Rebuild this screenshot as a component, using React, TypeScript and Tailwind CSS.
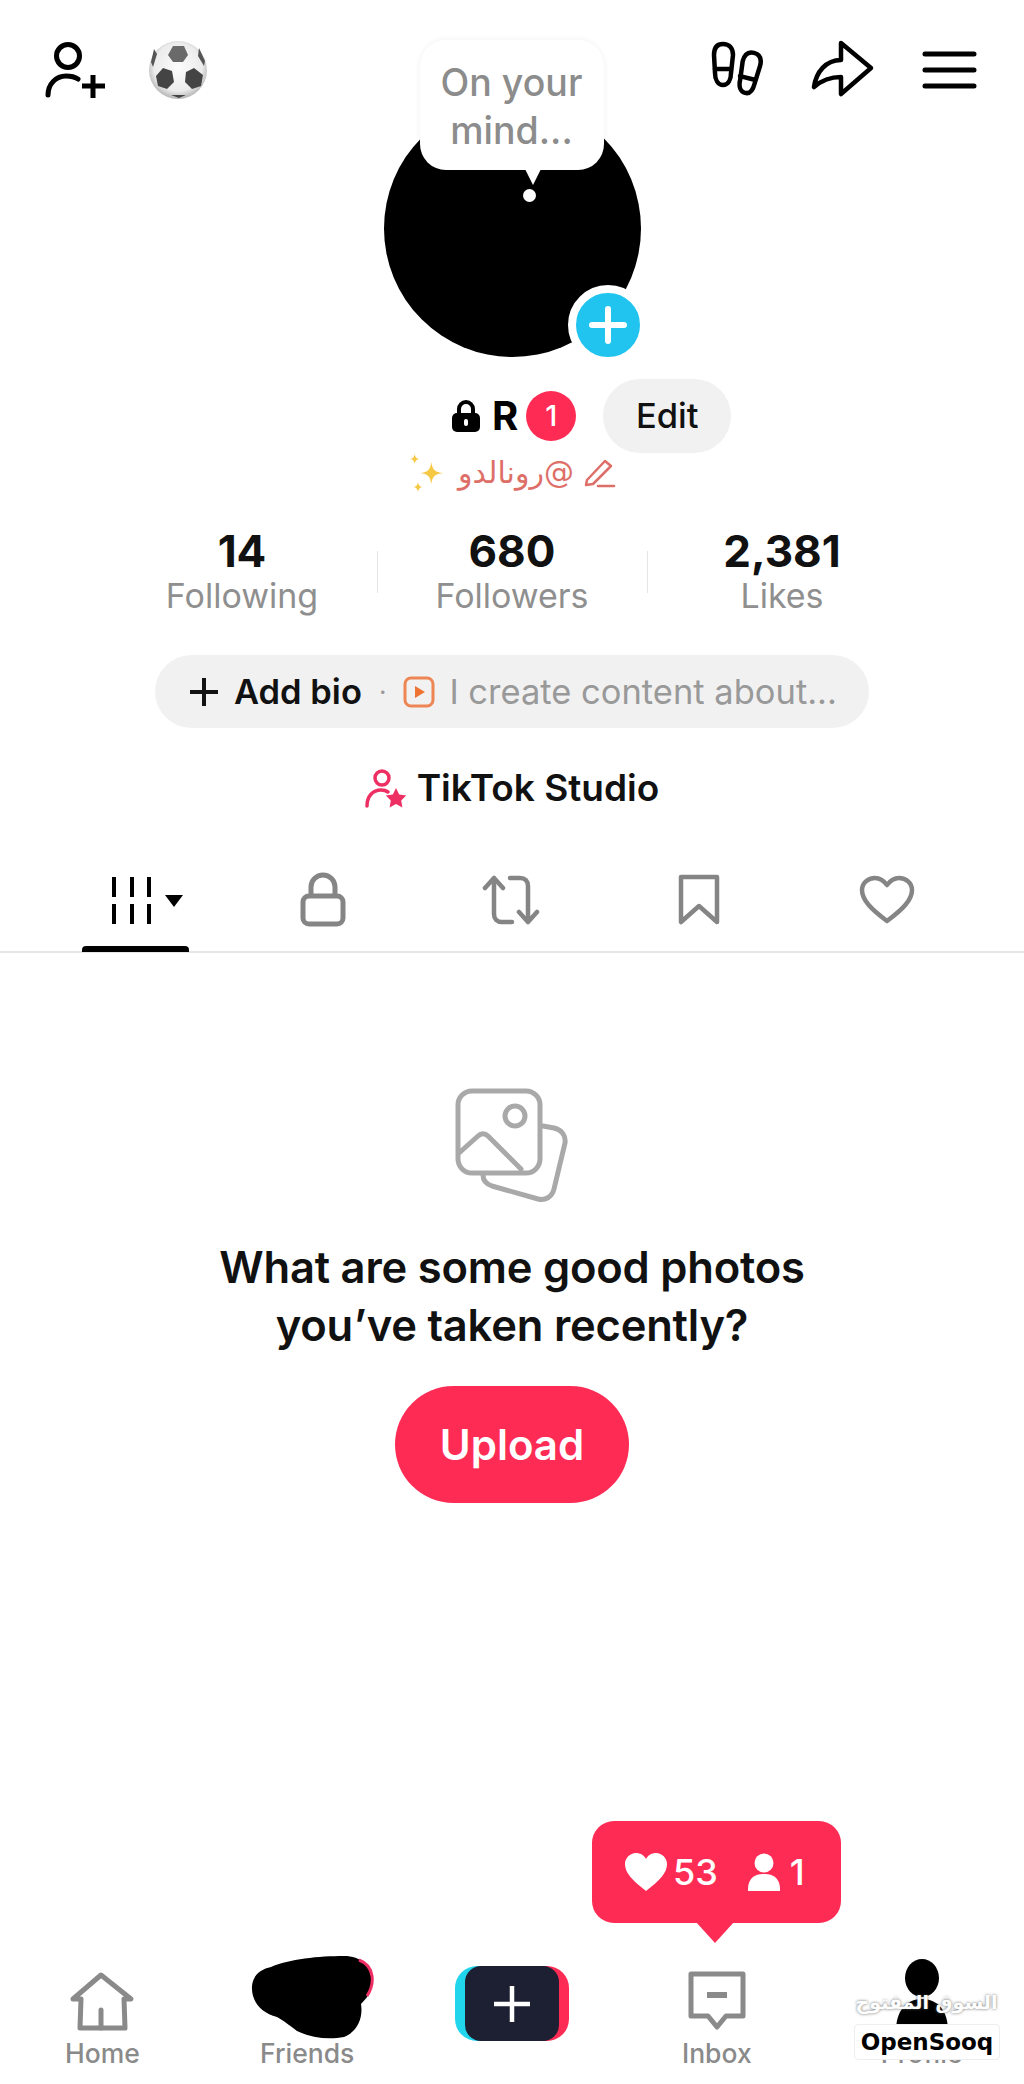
import React from 'react'

const FONT = 'font-["Inter","Noto_Sans",sans-serif]'

function PersonPlus() {
  return (
    <svg width="64" height="60" viewBox="44 38 64 60" fill="none" stroke="#000" strokeWidth="5" strokeLinecap="round">
      <circle cx="68" cy="54" r="11.5" />
      <path d="M48 93c0-11 8-19 18-19 5 0 9 1 12 3" />
      <path d="M82 84h23M93 73v23" strokeLinecap="butt" />
    </svg>
  )
}

function SoccerBall() {
  return (
    <svg width="64" height="64" viewBox="146 39 64 64">
      <defs>
        <radialGradient id="ball" cx="50%" cy="45%" r="55%">
          <stop offset="0%" stopColor="#fcfcfc" />
          <stop offset="75%" stopColor="#ececec" />
          <stop offset="100%" stopColor="#b5b5b5" />
        </radialGradient>
      </defs>
      <circle cx="178" cy="71" r="29" fill="url(#ball)" />
      <path d="M173 47h11l4 9-5 7h-10l-5-7z" fill="#6a6a6a" />
      <path d="M163 69l9 3 2 11-7 7-9-3-2-10z" fill="#444" />
      <path d="M194 69l-8 4-1 10 7 7 9-3 2-11z" fill="#444" />
      <path d="M154 50l-3 13 2 5 4-13z" fill="#555" />
      <path d="M199 49l6 13-1 5-6-10z" fill="#555" />
      <path d="M171 96h15l-7 3z" fill="#444" />
    </svg>
  )
}

function Footprints() {
  return (
    <svg width="56" height="60" viewBox="708 40 56 60" fill="none" stroke="#000" strokeWidth="4.5" strokeLinecap="round">
      <path d="M723 44c-6 0-9 4-9 11l1 18c0 7 3 12 8 12s8-5 8-12l2-18c0-7-4-11-10-11z" />
      <path d="M715 69h16" />
      <g transform="rotate(14 748 73)">
        <path d="M749 52c-6 0-9 4-9 11l2 18c0 7 3 12 8 12s7-5 7-12l1-18c0-7-3-11-9-11z" />
        <path d="M741 78h15" />
      </g>
    </svg>
  )
}

function Share() {
  return (
    <svg width="66" height="60" viewBox="810 40 66 60" fill="none" stroke="#000" strokeWidth="4.5" strokeLinejoin="round">
      <path d="M841 43l30 25-30 26V77c-11 0-19 3-27 10 2-15 12-27 27-27z" />
    </svg>
  )
}

function Menu() {
  return (
    <svg width="56" height="40" viewBox="922 49 56 40" fill="none" stroke="#000" strokeWidth="5" strokeLinecap="round">
      <path d="M925 53h49M925 69h49M925 85h49" />
    </svg>
  )
}

function LockSmall() {
  return (
    <svg width="28" height="32" viewBox="0 0 28 32">
      <path d="M7 14V9a7 7 0 0 1 14 0v5" fill="none" stroke="#000" strokeWidth="4" />
      <rect x="0" y="13" width="28" height="19" rx="5" fill="#000" />
      <rect x="12" y="19" width="4" height="7" rx="2" fill="#fff" />
    </svg>
  )
}

function Pencil() {
  return (
    <svg width="32" height="30" viewBox="0 0 32 30" fill="none" stroke="#dd6f68" strokeWidth="2.5" strokeLinejoin="round" strokeLinecap="round">
      <path d="M3 22L21 3l6 5L9 26l-7 1z" />
      <path d="M14 28h16" />
    </svg>
  )
}

function Sparkles() {
  return (
    <svg width="40" height="40" viewBox="0 0 36 36" fill="#f6c945">
      <path d="M21 8c1 7 3 9 11 10-8 1-10 3-11 10-1-7-3-9-10-10 7-1 9-3 10-10z" />
      <path d="M6 1c.5 3 1.500 4 4 4.500C7.500 6 6.500 7 6 10 5.500 7 4.500 6 2 5.500 4.500 5 5.500 4 6 1z" />
      <path d="M9 26c.5 3 1.500 4 4 4.500-2.500.5-3.500 1.500-4 4.500-.5-3-1.500-4-4-4.500 2.500-.5 3.500-1.500 4-4.500z" />
    </svg>
  )
}

function PlayTile() {
  return (
    <svg width="32" height="32" viewBox="0 0 32 32" fill="none">
      <rect x="2" y="2" width="28" height="28" rx="6" stroke="#ee8554" strokeWidth="3" />
      <path d="M12 10l10 6-10 6z" fill="#ee7433" />
    </svg>
  )
}

function StudioIcon() {
  return (
    <svg width="42" height="40" viewBox="0 0 42 40" fill="none" stroke="#ee2f64" strokeWidth="3.500" strokeLinecap="round">
      <circle cx="17" cy="10" r="7" />
      <path d="M2 38c0-10 6-16 14-16 3 0 5 .5 7 2" />
      <path d="M31 20l3.200 6.500 7 1-5 5 1.200 7-6.400-3.400-6.400 3.400 1.200-7-5-5 7-1z" fill="#ee2f64" stroke="none" />
    </svg>
  )
}

function GridTab() {
  return (
    <svg width="76" height="52" viewBox="110 872 76 52">
      <path d="M114 875v20M132 875v20M149 875v20M114 902v20M132 902v20M149 902v20" stroke="#000" strokeWidth="4" fill="none" />
      <path d="M165 893h18l-9 12z" fill="#000" />
    </svg>
  )
}

function LockTab() {
  return (
    <svg width="48" height="56" viewBox="0 0 48 56" fill="none" stroke="#858585" strokeWidth="5">
      <path d="M12 24V15a12 12 0 0 1 24 0v9" />
      <rect x="4" y="24" width="40" height="28" rx="6" />
    </svg>
  )
}

function RepostTab() {
  return (
    <svg width="58" height="52" viewBox="0 0 58 52" fill="none" stroke="#858585" strokeWidth="4.500" strokeLinecap="round" strokeLinejoin="round">
      <path d="M3 14L12 4l9 10" />
      <path d="M12 5v35c0 5 3 8 8 8h10" />
      <path d="M37 38l9 10 9-10" />
      <path d="M46 47V12c0-5-3-8-8-8h-10" />
    </svg>
  )
}

function BookmarkTab() {
  return (
    <svg width="44" height="52" viewBox="0 0 44 52" fill="none" stroke="#858585" strokeWidth="4.500" strokeLinejoin="round">
      <path d="M4 3h36v45L22 32 4 48z" />
    </svg>
  )
}

function HeartTab() {
  return (
    <svg width="56" height="50" viewBox="0 0 56 50" fill="none" stroke="#858585" strokeWidth="4.500" strokeLinejoin="round">
      <path d="M28 46C12 34 3 25 3 15 3 8 9 3 16 3c5 0 9 3 12 7 3-4 7-7 12-7 7 0 13 5 13 12 0 10-9 19-25 31z" />
    </svg>
  )
}

function PhotosIcon() {
  return (
    <svg width="116" height="116" viewBox="454 1087 116 116" fill="none" stroke="#a9a9a9" strokeWidth="5" strokeLinecap="round" strokeLinejoin="round">
      <rect x="458" y="1091" width="82" height="82" rx="14" />
      <circle cx="515" cy="1116" r="10" />
      <path d="M459 1153l19-17c3-3 7-3 10 0l33 33" />
      <path d="M543 1126l11 2c8 2 12 8 11 15l-11 46c-2 8-9 12-16 10l-46-13c-6-2-9-6-9-11" />
    </svg>
  )
}

function HomeIcon() {
  return (
    <svg width="66" height="60" viewBox="70 1970 66 60" fill="none" stroke="#8a8a8a" strokeWidth="5" strokeLinejoin="round" strokeLinecap="round">
      <path d="M74 1998l28-24 30 24h-7l1 29H81l1-29z" />
      <path d="M102 2009v18" />
    </svg>
  )
}

function FriendsBlob() {
  return (
    <svg className="translate-x-[5px] translate-y-[8px]" width="126" height="84" viewBox="250 1954 126 84">
      <path d="M345 1955C362 1955 372 1965 373 1978C374 1990 368 1997 362 2003C364 2015 360 2030 345 2036C330 2039 312 2037 298 2030C290 2024 285 2020 278 2016C262 2012 252 2000 253 1985C254 1974 262 1968 272 1966C290 1958 320 1955 345 1955Z" fill="#000" />
      <path d="M360 1959c8 3 12 9 13 16 1 7-1 14-5 20" fill="none" stroke="#ee2f64" strokeWidth="3" />
    </svg>
  )
}

function InboxIcon() {
  return (
    <svg width="58" height="60" viewBox="0 0 58 60" fill="none" stroke="#8a8a8a" strokeWidth="5" strokeLinejoin="round">
      <path d="M3 3h52v42H38l-9 11-9-11H3z" />
      <path d="M19 24h20" strokeWidth="6" />
    </svg>
  )
}

function ProfileIcon() {
  return (
    <svg width="64" height="72" viewBox="0 0 64 72" fill="#000">
      <ellipse cx="32" cy="19" rx="17" ry="19" />
      <path d="M6 72c0-20 10-32 26-32s26 12 26 32z" />
    </svg>
  )
}

function NavItem({ label, icon }: { label: string; icon: React.ReactNode }) {
  return (
    <div className="flex flex-col items-center">
      <div className="flex h-[92px] items-end justify-center pb-[6px]">{icon}</div>
      <span className="text-[26.5px] leading-[32px] font-medium text-[#8a8a8a]">{label}</span>
    </div>
  )
}

export default function App() {
  const tabs = [<GridTab />, <LockTab />, <RepostTab />, <BookmarkTab />, <HeartTab />]
  const stats = [
    ['14', 'Following'],
    ['680', 'Followers'],
    ['2,381', 'Likes'],
  ]

  return (
    <div className={`relative flex h-[2084px] w-[1024px] flex-col overflow-hidden bg-white ${FONT}`}>
      {/* top bar */}
      <div className="flex h-[100px] items-start justify-between pt-[38px] pr-[46px] pl-[44px]">
        <div className="flex items-center gap-[38px]">
          <PersonPlus />
          <SoccerBall />
        </div>
        <div className="flex items-center gap-[46px] pt-[2px]">
          <Footprints />
          <Share />
          <Menu />
        </div>
      </div>

      {/* avatar */}
      <div className="relative mx-auto h-[257px] w-[257px] rounded-full bg-black">
        <div className="absolute top-[-60px] left-[36px] flex h-[130px] w-[184px] flex-col items-center justify-center rounded-[26px] bg-white pt-[4px] text-[37.5px] leading-[48px] font-medium text-[#8c8c8c] shadow-[0_0_6px_rgba(0,0,0,0.06)]">
          <span>On your</span>
          <span>mind...</span>
        </div>
        <div className="absolute top-[69px] left-[141px] h-0 w-0 border-x-[8px] border-t-[16px] border-x-transparent border-t-white" />
        <div className="absolute top-[89px] left-[139px] h-[13px] w-[13px] rounded-full bg-white" />
        <div className="absolute top-[185px] left-[184px] flex h-[80px] w-[80px] items-center justify-center rounded-full border-[8px] border-white bg-[#20c4ee]">
          <svg width="40" height="40" viewBox="0 0 40 40" stroke="#fff" strokeWidth="6" strokeLinecap="round">
            <path d="M20 4v32M4 20h32" />
          </svg>
        </div>
      </div>

      {/* name */}
      <div className="mt-[22px] flex h-[74px] items-center pl-[452px]">
        <LockSmall />
        <span className="ml-[12px] text-[40px] font-bold text-black">R</span>
        <span className="ml-[8px] flex h-[50px] w-[50px] items-center justify-center rounded-full bg-[#fe2c55] text-[29px] font-medium text-white">1</span>
        <button className="ml-[27px] flex h-[74px] w-[128px] items-center justify-center rounded-full bg-[#f1f1f2] text-[34.5px] font-medium text-[#111]">Edit</button>
      </div>

      <div className="mt-[3px] flex h-[34px] items-center justify-center gap-[10px]">
        <Sparkles />
        <span className="font-['DejaVu_Sans',sans-serif] text-[30px] leading-[34px] text-[#dd6f68]" dir="rtl">@رونالدو</span>
        <Pencil />
      </div>

      {/* stats */}
      <div className="mt-[40px] flex h-[84px] items-center self-center">
        {stats.map(([num, label], i) => (
          <React.Fragment key={label}>
            {i > 0 && <div className="h-[42px] w-px bg-[#e5e5e5]" />}
            <div className="flex w-[269px] flex-col items-center">
              <span className="text-[44px] leading-[42px] font-bold text-[#111]">{num}</span>
              <span className="mt-[6px] text-[34px] leading-[36px] text-[#8f8f8f]">{label}</span>
            </div>
          </React.Fragment>
        ))}
      </div>

      {/* bio */}
      <div className="mt-[41px] flex h-[73px] w-[714px] items-center self-center rounded-full bg-[#f1f1f2] pl-[35px]">
        <svg width="28" height="28" viewBox="0 0 28 28" stroke="#111" strokeWidth="4">
          <path d="M14 0v28M0 14h28" />
        </svg>
        <span className="ml-[16px] text-[34.5px] font-semibold text-[#111]">Add bio</span>
        <span className="mx-[17px] text-[26px] text-[#999]">·</span>
        <PlayTile />
        <span className="ml-[14px] text-[34.5px] text-[#999]">I create content about...</span>
      </div>

      {/* studio */}
      <div className="mt-[38px] flex h-[44px] items-center justify-center gap-[10px]">
        <StudioIcon />
        <span className="text-[37px] font-semibold text-[#111]">TikTok Studio</span>
      </div>

      {/* tabs */}
      <div className="mt-[50px] flex h-[93px] shrink-0 border-b-2 border-[#e6e6e6] px-[41px]">
        {tabs.map((icon, i) => (
          <div key={i} className="relative flex w-[188px] items-center justify-center pb-[12px]">
            {i === 0 ? <div className="translate-x-[13px]">{icon}</div> : icon}
            {i === 0 && <div className="absolute right-[40px] bottom-[-1px] left-[41px] h-[6px] rounded-t-[4px] bg-black" />}
          </div>
        ))}
      </div>

      {/* empty state */}
      <div className="flex flex-col items-center pt-[134px]">
        <PhotosIcon />
        <h2 className="mt-[35px] text-center text-[43.5px] leading-[58px] font-semibold tracking-[-0.2px] text-[#111]">
          What are some good photos
          <br />
          you’ve taken recently?
        </h2>
        <button className="mt-[32px] flex h-[117px] w-[234px] items-center justify-center rounded-full bg-[#fe2c55] text-[42px] font-semibold text-white">
          Upload
        </button>
      </div>

      {/* bottom nav */}
      <div className="mt-auto grid grid-cols-5 pb-[15px]">
        <NavItem label="Home" icon={<HomeIcon />} />
        <NavItem label="Friends" icon={<FriendsBlob />} />
        <div className="flex flex-col items-center">
          <div className="relative mt-[21px] h-[75px] w-[114px] rounded-[22px] bg-[linear-gradient(90deg,#20d5ec_0_50%,#fe2c55_50%_100%)]">
            <div className="absolute inset-y-0 right-[10px] left-[10px] flex items-center justify-center rounded-[16px] bg-[#1c2032]">
              <svg width="36" height="36" viewBox="0 0 36 36" stroke="#fff" strokeWidth="4.500">
                <path d="M18 0v36M0 18h36" />
              </svg>
            </div>
          </div>
        </div>
        <NavItem label="Inbox" icon={<InboxIcon />} />
        <NavItem label="Profile" icon={<ProfileIcon />} />
      </div>

      {/* likes notification */}
      <div className="absolute top-[1821px] left-[592px] flex h-[102px] w-[249px] items-center rounded-[22px] bg-[#fe2c55] pl-[33px] text-[36px] font-medium text-white">
        <svg width="42" height="38" viewBox="0 0 42 38" fill="#fff">
          <path d="M21 38C7 27 0 20 0 11 0 5 5 0 11 0c4 0 8 2 10 6 2-4 6-6 10-6 6 0 11 5 11 11 0 9-7 16-21 27z" />
        </svg>
        <span className="ml-[6px]">53</span>
        <svg className="ml-[29px]" width="34" height="38" viewBox="0 0 34 38" fill="#fff">
          <circle cx="17" cy="10" r="9.500" />
          <path d="M1 38c0-4 0-8 3-12 3-4 8-5 13-5s10 1 13 5c3 4 3 8 3 12z" />
        </svg>
        <span className="ml-[9px]">1</span>
        <div className="absolute top-[101px] left-[104px] h-0 w-0 border-x-[19px] border-t-[21px] border-x-transparent border-t-[#fe2c55]" />
      </div>

      {/* watermark */}
      <div className="absolute top-[1984px] left-[853px] w-[147px] text-center font-['DejaVu_Sans',sans-serif] text-[19px] leading-[36px] font-bold whitespace-nowrap text-white [text-shadow:0_0_3px_rgba(90,90,90,0.9)]">
        السوق المفتوح
      </div>
      <div className="absolute top-[2024px] left-[854px] flex h-[36px] w-[146px] items-center justify-center rounded-[4px] border border-[#eee] bg-white font-['DejaVu_Sans',sans-serif] text-[23px] font-bold text-black">
        OpenSooq
      </div>
    </div>
  )
}
